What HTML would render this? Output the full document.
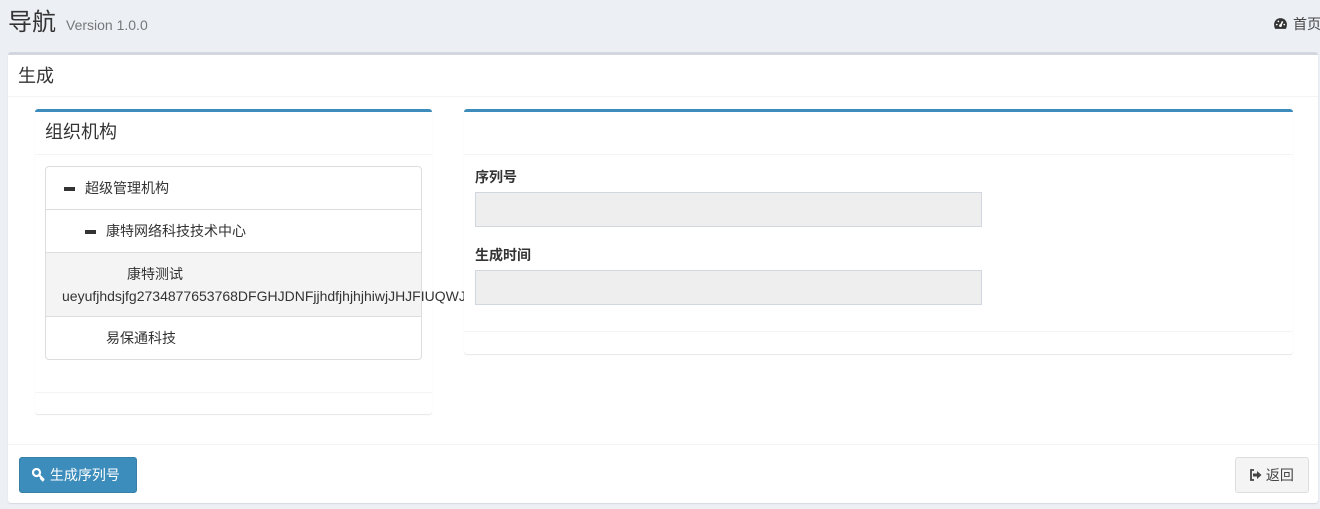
<!DOCTYPE html>
<html><head><meta charset="utf-8"><style>
*{box-sizing:border-box;margin:0;padding:0}
body{width:1320px;height:509px;background:#ecf0f5;font-family:"Liberation Sans","Noto Sans CJK SC",sans-serif;font-size:14px;color:#333;position:relative;overflow:hidden}
.abs{position:absolute}
</style></head><body>
<div class="abs" style="left:8px;top:7px;font-size:24px;color:#333;line-height:32px">导航<span style="font-size:14px;color:#777;margin-left:10px">Version 1.0.0</span></div>
<div class="abs" style="left:1273px;top:15px;font-size:14px;line-height:18px;color:#444;white-space:nowrap">
<svg width="15" height="13" viewBox="0 0 14 12" style="vertical-align:-1px"><path d="M7 1A6 6 0 0 0 1 7q0 2 1 4h10q1-2 1-4A6 6 0 0 0 7 1z" fill="#333"/><path d="M7 8L9 4" stroke="#fff" stroke-width="1.5"/><circle cx="7" cy="8" r="1.3" fill="#fff"/><circle cx="3.5" cy="7" r=".8" fill="#fff"/><circle cx="10.5" cy="7" r=".8" fill="#fff"/><circle cx="5" cy="4" r=".8" fill="#fff"/></svg><span style="margin-left:5px">首页</span></div>
<div class="abs" style="left:8px;top:52px;width:1310px;height:451px;background:#fff;border-top:3px solid #d2d6de;border-radius:3px;box-shadow:0 1px 1px rgba(0,0,0,.1)">
 <div style="height:42px;border-bottom:1px solid #f4f4f4;padding:10px 10px;font-size:18px;line-height:22px">生成</div>
</div>
<div class="abs" style="left:35px;top:109px;width:397px;height:305px;background:#fff;border-top:3px solid #3c8dbc;border-radius:3px;box-shadow:0 1px 1px rgba(0,0,0,.1)">
 <div style="height:43px;border-bottom:1px solid #f4f4f4;padding:9px 10px;font-size:18px;line-height:22px">组织机构</div>
 <div class="abs" style="left:0;right:0;top:280px;border-top:1px solid #f4f4f4"></div>
</div>
<div class="abs" style="left:45px;top:166px;width:377px;height:194px;border:1px solid #ddd;border-radius:4px;background:#fff;overflow:visible">
 <div style="height:43px;border-bottom:1px solid #ddd;padding-left:18px;line-height:42px"><span style="display:inline-block;width:11px;height:4px;background:#333;vertical-align:middle;margin-right:10px"></span>超级管理机构</div>
 <div style="height:43px;border-bottom:1px solid #ddd;padding-left:39px;line-height:42px"><span style="display:inline-block;width:11px;height:4px;background:#333;vertical-align:middle;margin-right:10px"></span>康特网络科技技术中心</div>
 <div style="height:64px;border-bottom:1px solid #ddd;background:#f4f4f4;padding:10px 0 0 16px;line-height:22px;white-space:nowrap;overflow:visible"><div style="padding-left:65px">康特测试</div><div style="width:404px;overflow:hidden">ueyufjhdsjfg2734877653768DFGHJDNFjjhdfjhjhjhiwjJHJFIUQWJHI</div></div>
 <div style="height:42px;padding-left:60px;line-height:42px">易保通科技</div>
</div>
<div class="abs" style="left:464px;top:109px;width:829px;height:245px;background:#fff;border-top:3px solid #3c8dbc;border-radius:3px;box-shadow:0 1px 1px rgba(0,0,0,.1)">
 <div style="height:43px;border-bottom:1px solid #f4f4f4"></div>
 <div class="abs" style="left:0;right:0;top:219px;border-top:1px solid #f4f4f4"></div>
 <div class="abs" style="left:11px;top:55px;font-weight:bold">序列号</div>
 <div class="abs" style="left:11px;top:80px;width:507px;height:35px;background:#eee;border:1px solid #d2d6de"></div>
 <div class="abs" style="left:11px;top:133px;font-weight:bold">生成时间</div>
 <div class="abs" style="left:11px;top:158px;width:507px;height:35px;background:#eee;border:1px solid #d2d6de"></div>
</div>
<div class="abs" style="left:8px;top:444px;width:1310px;border-top:1px solid #f4f4f4"></div>
<div class="abs" style="left:19px;top:457px;width:118px;height:36px;background:#3c8dbc;border:1px solid #367fa9;border-radius:3px;color:#fff;line-height:34px;padding-left:12px">
<svg width="14" height="14" viewBox="0 0 14 14" style="vertical-align:-2px"><circle cx="4.5" cy="4.5" r="3.5" fill="none" stroke="#fff" stroke-width="2.2"/><path d="M7 7l5 5M10 10l-1.5 1.5M11.5 11.5l-1.5 1.5" stroke="#fff" stroke-width="2.2"/></svg> 生成序列号</div>
<div class="abs" style="left:1235px;top:457px;width:74px;height:36px;background:#f4f4f4;border:1px solid #ddd;border-radius:3px;color:#444;line-height:34px;padding-left:13px">
<svg width="13" height="12" viewBox="0 0 13 12" style="vertical-align:-1px"><path d="M5 1H2v10h3" fill="none" stroke="#444" stroke-width="1.8"/><path d="M4 4.5h4V2l4.5 4L8 10V7.5H4z" fill="#444"/></svg> 返回</div>
</body></html>
